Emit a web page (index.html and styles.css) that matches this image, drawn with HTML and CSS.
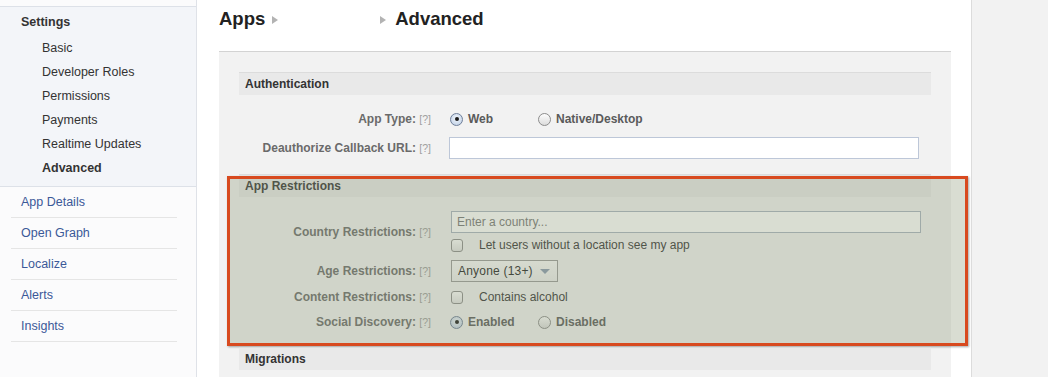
FILE: index.html
```html
<!DOCTYPE html>
<html lang="en">
<head>
    <meta charset="UTF-8">
    <title>Advanced</title>
    <link rel="stylesheet" href="styles.css">
</head>
<body>
    <div class="page">
        <aside class="sidebar">
            <div class="nav-settings">
                <div class="nav-head">Settings</div>
                <ul class="nav-sub">
                    <li>Basic</li>
                    <li>Developer Roles</li>
                    <li>Permissions</li>
                    <li>Payments</li>
                    <li>Realtime Updates</li>
                    <li class="current">Advanced</li>
                </ul>
            </div>
            <ul class="nav-list">
                <li>App Details</li>
                <li>Open Graph</li>
                <li>Localize</li>
                <li>Alerts</li>
                <li>Insights</li>
            </ul>
        </aside>

        <main class="main">
            <h1 class="crumbs">
                <span>Apps</span>
                <span class="arrow"></span>
                <span class="crumb-gap"></span>
                <span class="arrow"></span>
                <span>Advanced</span>
            </h1>

            <div class="panel">
                <section class="section">
                    <div class="section-head">Authentication</div>
                    <div class="section-body auth">
                        <div class="row">
                            <div class="label">App Type: <span class="help">[?]</span></div>
                            <div class="control">
                                <span class="option"><span class="radio checked"></span>Web</span>
                                <span class="option"><span class="radio"></span>Native/Desktop</span>
                            </div>
                        </div>
                        <div class="row">
                            <div class="label">Deauthorize Callback URL: <span class="help">[?]</span></div>
                            <div class="control">
                                <input type="text" class="text-input url-input">
                            </div>
                        </div>
                    </div>
                </section>

                <section class="section restrictions">
                    <div class="section-head">App Restrictions</div>
                    <div class="section-body">
                        <div class="row">
                            <div class="label">Country Restrictions: <span class="help">[?]</span></div>
                            <div class="control stacked">
                                <input type="text" class="text-input country-input" placeholder="Enter a country...">
                                <label class="check-line"><span class="checkbox"></span>Let users without a location see my app</label>
                            </div>
                        </div>
                        <div class="row">
                            <div class="label">Age Restrictions: <span class="help">[?]</span></div>
                            <div class="control">
                                <span class="dropdown">Anyone (13+)<span class="caret"></span></span>
                            </div>
                        </div>
                        <div class="row">
                            <div class="label">Content Restrictions: <span class="help">[?]</span></div>
                            <div class="control">
                                <label class="check-line"><span class="checkbox"></span>Contains alcohol</label>
                            </div>
                        </div>
                        <div class="row social">
                            <div class="label">Social Discovery: <span class="help">[?]</span></div>
                            <div class="control">
                                <span class="option"><span class="radio checked"></span>Enabled</span>
                                <span class="option"><span class="radio"></span>Disabled</span>
                            </div>
                        </div>
                    </div>
                    <div class="highlight"></div>
                </section>

                <section class="section">
                    <div class="section-head">Migrations</div>
                </section>
            </div>
        </main>

        <div class="rail"></div>
    </div>
</body>
</html>
```

FILE: styles.css
```css
html, body {
    margin: 0;
    padding: 0;
    height: 100%;
    overflow: hidden;
}

body {
    font-family: "Liberation Sans", Arial, sans-serif;
    font-size: 12px;
    color: #333;
    background-color: #fff;
}

.page {
    display: flex;
    height: 377px;
    overflow: hidden;
}

/* left nav */

.sidebar {
    width: 196px;
    border-right: 1px solid #dfe2e8;
    background-color: #fbfbfc;
    padding-top: 6px;
}

.nav-settings {
    background-color: #f3f5f9;
    border-top: 1px solid #dde1e8;
    border-bottom: 1px solid #dde1e8;
    padding: 4px 0 6px 0;
}

.nav-head {
    font-size: 12.5px;
    font-weight: bold;
    line-height: 22px;
    margin-bottom: 3px;
    padding-left: 21px;
    color: #333;
}

.nav-sub {
    list-style: none;
    margin: 0;
    padding: 0 0 0 42px;
}

.nav-sub li {
    font-size: 12.5px;
    line-height: 24px;
    color: #333;
}

.nav-sub li.current {
    font-weight: bold;
}

.nav-list {
    list-style: none;
    margin: 0 19px 0 11px;
    padding: 0;
}

.nav-list li {
    font-size: 12.5px;
    line-height: 30px;
    padding-left: 10px;
    color: #3b5998;
    border-bottom: 1px solid #e5e5e5;
}

/* main column */

.main {
    flex: 1;
    display: flex;
    flex-direction: column;
    padding: 0 20px 0 22px;
}

.crumbs {
    display: flex;
    align-items: center;
    margin: 0;
    height: 38px;
    padding-bottom: 1px;
    font-size: 18.5px;
    font-weight: bold;
    color: #222;
}

.arrow {
    width: 0;
    height: 0;
    border-left: 6px solid #b3b3b3;
    border-top: 4px solid transparent;
    border-bottom: 4px solid transparent;
    margin: 2px 9px 0 7px;
}

.crumb-gap {
    width: 86px;
}

.panel {
    flex: 1;
    background-color: #f2f2f2;
    border-top: 1px solid #d3d3d3;
    margin-top: 12px;
    padding: 20px 20px 0 20px;
}

.section {
    position: relative;
}

.section-head {
    height: 22px;
    line-height: 22px;
    border-top: 1px solid #dcdcdc;
    background-color: #e9e9e9;
    padding-left: 6px;
    font-weight: bold;
    color: #333;
}

.section-body {
    display: flex;
    flex-direction: column;
    gap: 8px;
    padding: 14px 0 17px 0;
}

.section-body.auth {
    gap: 10px;
    padding: 16px 0 15px 0;
}

.row {
    display: flex;
    align-items: center;
    min-height: 14px;
}

.row.social {
    margin-top: 2px;
}

.label {
    width: 192px;
    margin-right: 19px;
    text-align: right;
    font-weight: bold;
    color: #6a6a6a;
    line-height: 14px;
}

.help {
    font-weight: normal;
    color: #a0a0a0;
    font-size: 10.5px;
}

.control {
    display: flex;
    align-items: center;
}

.control.stacked {
    flex-direction: column;
    align-items: flex-start;
    gap: 5px;
}

.option {
    display: flex;
    align-items: center;
    min-width: 88px;
    font-weight: bold;
    color: #5a5a5a;
    line-height: 16px;
}

.radio {
    flex-shrink: 0;
    width: 11px;
    height: 11px;
    border: 1px solid #8c8c8c;
    border-radius: 50%;
    background: linear-gradient(#fdfdfd, #dcdcdc);
    margin-right: 5px;
    display: flex;
    align-items: center;
    justify-content: center;
}

.radio.checked {
    border-color: #6f7f99;
    background: radial-gradient(circle at 50% 40%, #f2f6fb, #b9cbe3);
}

.radio.checked::after {
    content: "";
    width: 4px;
    height: 4px;
    border-radius: 50%;
    background-color: #1a1a1a;
}

.text-input {
    height: 22px;
    box-sizing: border-box;
    border: 1px solid #bdc7d8;
    background-color: #fff;
    font-family: inherit;
    font-size: 12px;
    padding: 0 5px;
    color: #333;
    margin: 0;
}

.text-input::placeholder {
    color: #777;
}

.url-input {
    width: 470px;
    margin-left: -1px;
}

.country-input {
    width: 470px;
    margin-left: 1px;
    border-color: #a9b3c0;
}

.check-line {
    display: flex;
    align-items: center;
    line-height: 14px;
    color: #333;
    margin-left: 1px;
}

.checkbox {
    flex-shrink: 0;
    width: 10px;
    height: 11px;
    border: 1px solid #8d8d8d;
    border-radius: 3px;
    background: linear-gradient(#fff, #e4e4e4);
    margin-right: 16px;
}

.dropdown {
    display: flex;
    align-items: center;
    justify-content: space-between;
    width: 107px;
    height: 22px;
    box-sizing: border-box;
    margin-left: 1px;
    padding: 0 7px 0 6px;
    border: 1px solid #9a9a9a;
    background: linear-gradient(#fbfbfb, #eeeeee);
    color: #222;
    letter-spacing: 0.2px;
}

.caret {
    width: 0;
    height: 0;
    border-top: 5px solid #8a9ab0;
    border-left: 5px solid transparent;
    border-right: 5px solid transparent;
}

/* callout drawn over the restrictions block */
.highlight {
    position: absolute;
    top: 2px;
    bottom: 1px;
    left: -12px;
    right: -37px;
    border: 3px solid #d84a1f;
    background-color: rgba(140, 152, 118, 0.33);
    box-shadow: 1px 1px 2px rgba(0, 0, 0, 0.35);
    pointer-events: none;
}

.rail {
    width: 76px;
    border-left: 1px solid #dcdcdc;
    background-color: #f2f2f2;
}
```
